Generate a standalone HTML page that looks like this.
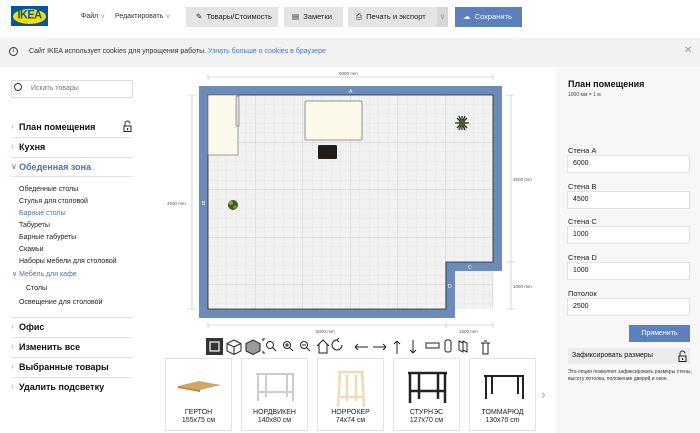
<!DOCTYPE html>
<html><head><meta charset="utf-8"><style>
*{margin:0;padding:0;box-sizing:border-box}
body{width:700px;height:433px;overflow:hidden;background:#fff;font-family:"Liberation Sans","DejaVu Sans",sans-serif;position:relative;color:#111}
.a{position:absolute;white-space:nowrap}
.btn{position:absolute;background:#e4e4e4;height:20px;top:7px;font-size:7.5px;line-height:20px;color:#222}
.lt{font-size:9px;font-weight:bold;left:19px}
.hr{position:absolute;left:11px;width:122px;height:1px;background:#e2e2e2}
.sub{font-size:7px;left:19px;color:#222}
.chev{position:absolute;left:11px;font-size:8px;color:#aaa}
.lab{position:absolute;left:568px;font-size:7.5px;color:#222}
.inp{position:absolute;left:567px;width:123px;height:18px;background:#fff;border:1px solid #e3e3e3;font-size:7px;padding-left:5px;line-height:16px}
.card{position:absolute;top:358px;width:67px;height:73px;border:1px solid #e3e3e3;background:#fff;font-size:7px;text-align:center;line-height:8px;color:#222}
.card div{position:absolute;bottom:5px;width:100%}
</style></head><body>
<!-- header -->
<div class="a" style="left:11px;top:6px;width:37px;height:20px;background:#0058a3"></div>
<div class="a" style="left:13px;top:8.5px;width:33px;height:15px;background:#ffdb00;border-radius:50%"></div>
<div class="a" style="left:12px;top:9px;width:35px;font-size:11px;font-weight:bold;color:#0058a3;text-align:center;letter-spacing:-0.6px;transform:scaleY(1.1)">IKEA</div>
<div class="a" style="left:81px;top:12px;font-size:7px;color:#333">Файл <span style="color:#aaa">∨</span></div>
<div class="a" style="left:115px;top:12px;font-size:7px;color:#333">Редактировать <span style="color:#aaa">∨</span></div>
<div class="btn" style="left:186px;width:92px;padding-left:10px">✎&nbsp; Товары/Стоимость</div>
<div class="btn" style="left:284px;width:59px;padding-left:8px">▤&nbsp; Заметки</div>
<div class="btn" style="left:348px;width:89px;padding-left:8px">⎙&nbsp; Печать и экспорт</div>
<div class="btn" style="left:437px;width:11px;background:#d6d6d6;color:#999;text-align:center">∨</div>
<div class="btn" style="left:455px;width:67px;background:#5b80bd;color:#fff;padding-left:8px">☁&nbsp; Сохранить</div>
<!-- cookie -->
<div class="a" style="left:0;top:38px;width:700px;height:29px;background:#f2f2f2"></div>
<div class="a" style="left:9px;top:47px;width:9px;height:9px;border:1px solid #333;border-radius:50%;font-size:6px;text-align:center;line-height:7px">i</div>
<div class="a" style="left:29px;top:48px;font-size:7px;color:#333">Сайт IKEA использует cookies для упрощения работы. <span style="color:#4a74b5">Узнать больше о cookies в браузере</span></div>
<div class="a" style="left:684px;top:45px;font-size:10px;color:#999">✕</div>
<!-- left panel -->
<div class="a" style="left:11px;top:80px;width:122px;height:18px;border:1px solid #ddd;font-size:7px;color:#777;line-height:16px;padding-left:19px">Искать товары</div>
<div class="a" style="left:14px;top:83px;width:8px;height:8px;border:1.2px solid #333;border-radius:50%"></div>
<span class="chev" style="top:122px">›</span><div class="a lt" style="top:122px">План помещения</div>
<svg class="a" style="left:123px;top:120px" width="9" height="12"><path d="M2 6V3.5A2.5 2.5 0 0 1 7 3.5" fill="none" stroke="#222"/><rect x="1" y="6" width="7" height="5.5" fill="none" stroke="#222"/><rect x="4" y="8" width="1.2" height="2" fill="#222"/></svg>
<div class="hr" style="top:137px"></div>
<span class="chev" style="top:142px">›</span><div class="a lt" style="top:142px">Кухня</div>
<div class="hr" style="top:157px"></div>
<span class="chev" style="top:162px;color:#4a74b5">∨</span><div class="a lt" style="top:162px;color:#4a74b5">Обеденная зона</div>
<div class="hr" style="top:176px"></div>
<div class="a sub" style="top:186px">Обеденные столы</div>
<div class="a sub" style="top:198px">Стулья для столовой</div>
<div class="a sub" style="top:210px;color:#4a74b5">Барные столы</div>
<div class="a sub" style="top:222px">Табуреты</div>
<div class="a sub" style="top:234px">Барные табуреты</div>
<div class="a sub" style="top:246px">Скамьи</div>
<div class="a sub" style="top:258px">Наборы мебели для столовой</div>
<div class="a sub" style="top:270px;left:12px;color:#4a74b5">∨ Мебель для кафе</div>
<div class="a sub" style="top:285px;left:26px">Столы</div>
<div class="a sub" style="top:299px">Освещение для столовой</div>
<div class="hr" style="top:317px"></div>
<span class="chev" style="top:322px">›</span><div class="a lt" style="top:322px">Офис</div>
<div class="hr" style="top:337px"></div>
<span class="chev" style="top:342px">›</span><div class="a lt" style="top:342px">Изменить все</div>
<div class="hr" style="top:357px"></div>
<span class="chev" style="top:362px">›</span><div class="a lt" style="top:362px">Выбранные товары</div>
<div class="hr" style="top:377px"></div>
<span class="chev" style="top:382px">›</span><div class="a lt" style="top:382px">Удалить подсветку</div>
<!-- canvas -->
<svg class="a" style="left:0;top:0" width="700" height="433">
<defs><pattern id="g" x="208" y="95" width="9.5" height="9.5" patternUnits="userSpaceOnUse"><path d="M9.5 0V9.5H0" fill="none" stroke="#dedede" stroke-width="0.6"/></pattern>
<pattern id="G" x="208" y="95" width="47.5" height="47.5" patternUnits="userSpaceOnUse"><path d="M47.5 0V47.5H0" fill="none" stroke="#c8c8c8" stroke-width="0.8"/></pattern></defs>
<g stroke="#bbb" stroke-width="0.6" fill="none">
<path d="M208 74V80M493 74V80M208 77H493"/>
<path d="M187 95H197M187 309H197M192 95V309"/>
<path d="M506 95H515M506 262H515M506 309H515M511 95V309"/>
<path d="M208 322V328M446 322V328M493 322V328M208 325H493"/>
</g>
<g font-size="4.5" fill="#555" font-family="Liberation Sans">
<text x="339" y="75">6000 mm</text><text x="167" y="205">4500 mm</text>
<text x="513" y="181">3500 mm</text><text x="513" y="288">1000 mm</text>
<text x="316" y="333">5000 mm</text><text x="459" y="333">1000 mm</text></g>
<path d="M199 86H502V271H455V318H199Z" fill="#6b8cb9"/>
<rect x="208" y="95" width="285" height="214" fill="#f1f1f1"/>
<rect x="208" y="95" width="285" height="214" fill="url(#g)"/>
<rect x="208" y="95" width="285" height="214" fill="url(#G)"/>
<path d="M446 262H502V271H455V318H446Z" fill="#6b8cb9"/>
<path d="M208 309V95H493V262H446V309Z" fill="none" stroke="#222" stroke-width="0.8"/>
<g font-size="5" fill="#fff" font-family="Liberation Sans"><text x="349" y="93">A</text><text x="202" y="205">B</text><text x="468" y="269">C</text><text x="448" y="288">D</text></g>
<rect x="208" y="95" width="30" height="60" fill="#fdf9ea" stroke="#777" stroke-width="0.7"/>
<rect x="236" y="96" width="3" height="30" fill="#ddd" stroke="#555" stroke-width="0.5"/>
<rect x="305" y="101" width="57" height="39" rx="1.5" fill="#fdf9ea" stroke="#777" stroke-width="0.8"/>
<rect x="318" y="145" width="19" height="14" rx="1.5" fill="#231d19"/>
<g stroke="#222" stroke-width="1.3"><path d="M455 123H469M462 116V130M457 118L467 128M467 118L457 128M459 116L465 130M465 116L459 130"/></g>
<circle cx="462" cy="123" r="3.5" fill="#4a5a28"/>
<circle cx="233" cy="205" r="5" fill="#3d5a22"/><circle cx="231" cy="203" r="2" fill="#8aa04a"/><circle cx="235" cy="207" r="1.8" fill="#7a9040"/>
<!-- toolbar -->
<rect x="206" y="338" width="17" height="17" fill="#333"/><rect x="210" y="342" width="9" height="9" fill="none" stroke="#fff" stroke-width="1.2"/>
<g fill="none" stroke="#222" stroke-width="1">
<path d="M234 340L241 343.5V351L234 354.5L227 351V343.5ZM227 343.5L234 347L241 343.5M234 347V354.5"/>
<path d="M253 340L260 343.5V351L253 354.5L246 351V343.5Z" fill="#999"/>
<circle cx="270" cy="345" r="3.5"/><path d="M272.5 347.5L276 351M263 341V339H265M263 351V353H265"/>
<circle cx="287" cy="345" r="3.5"/><path d="M289.5 347.5L293 351M285 345H289M287 343V347"/>
<circle cx="304" cy="345" r="3.5"/><path d="M306.5 347.5L310 351M302 345H306"/>
<path d="M317 346L323 340L329 346M319 344V353H327V344"/>
<path d="M342 345A5 5 0 1 1 337 340M337 340L339 338M337 340L339 342"/>
<path d="M355 347H368M355 347L358 344M355 347L358 350"/>
<path d="M373 347H386M386 347L383 344M386 347L383 350"/>
<path d="M397 341V354M397 341L394 344M397 341L400 344"/>
<path d="M413 340V353M413 353L410 350M413 353L416 350"/>
<rect x="426" y="343" width="13" height="5"/><rect x="445" y="340" width="6" height="12" rx="2"/><path d="M463 341L467 343V352L463 350ZM459 341L463 343V352L459 350Z"/>
<path d="M481 343H490M483 343V354H488V343M484 341H487"/></g>
</svg>
<!-- cards -->
<div class="card" style="left:165px"><svg width="67" height="45"><path d="M12 27L33 22L55 26L34 31Z" fill="#d2a765"/><path d="M12 27L34 31V33L12 29Z" fill="#b4884a"/></svg><div>ГЕРТОН<br>155x75 см</div></div>
<div class="card" style="left:241px"><svg width="67" height="48"><g stroke="#ccc" stroke-width="2" fill="none"><path d="M14 15H52M16 15V42M24 15V38M45 15V38M51 15V42M16 33H51"/></g></svg><div>НОРДВИКЕН<br>140x80 см</div></div>
<div class="card" style="left:317px"><svg width="67" height="50"><g stroke="#ecdcb8" stroke-width="2.5" fill="none"><path d="M20 13H46M22 13L20 48M44 13L46 48M29 16V42M38 16V42M22 38H44"/></g></svg><div>НОРРОКЕР<br>74x74 см</div></div>
<div class="card" style="left:393px"><svg width="67" height="48"><g stroke="#222" stroke-width="2.5" fill="none"><path d="M14 14H53M16 14V44M25 14V40M44 14V40M51 14V44M16 32H51"/></g></svg><div>СТУРНЭС<br>127x70 см</div></div>
<div class="card" style="left:469px"><svg width="67" height="45"><g stroke="#222" stroke-width="2" fill="none"><path d="M14 17H54M16 17V40M22 17V35M48 17V35M53 17V40"/></g></svg><div>ТОММАРЮД<br>130x70 cm</div></div>
<div class="a" style="left:541px;top:386px;font-size:14px;color:#aaa">›</div>
<!-- right panel -->
<div class="a" style="left:556px;top:67px;width:144px;height:366px;background:#f7f7f7"></div>
<div class="a" style="left:568px;top:79px;font-size:9px;font-weight:bold">План помещения</div>
<div class="a" style="left:568px;top:92px;font-size:5px;color:#444">1000 мм = 1 м</div>
<div class="lab" style="top:146px">Стена A</div><div class="inp" style="top:155px">6000</div>
<div class="lab" style="top:182px">Стена B</div><div class="inp" style="top:191px">4500</div>
<div class="lab" style="top:217px">Стена C</div><div class="inp" style="top:226px">1000</div>
<div class="lab" style="top:253px">Стена D</div><div class="inp" style="top:262px">1000</div>
<div class="lab" style="top:289px">Потолок</div><div class="inp" style="top:298px">2500</div>
<div class="a" style="left:629px;top:325px;width:61px;height:17px;background:#5b80bd;color:#fff;font-size:7px;text-align:center;line-height:17px">Применить</div>
<div class="a" style="left:568px;top:348px;width:122px;height:16px;background:#ececec;font-size:7px;line-height:16px;padding-left:4px">Зафиксировать размеры</div>
<svg class="a" style="left:678px;top:350px" width="9" height="12"><path d="M2 6V3.5A2.5 2.5 0 0 1 7 3.5" fill="none" stroke="#222"/><rect x="1" y="6" width="7" height="5.5" fill="none" stroke="#222"/><rect x="4" y="8" width="1.2" height="2" fill="#222"/></svg>
<div class="a" style="left:568px;top:369px;font-size:5px;line-height:6.5px;color:#333;white-space:normal;width:125px">Эта опция позволяет зафиксировать размеры стены, высоту потолка, положение дверей и окон.</div>
</body></html>
